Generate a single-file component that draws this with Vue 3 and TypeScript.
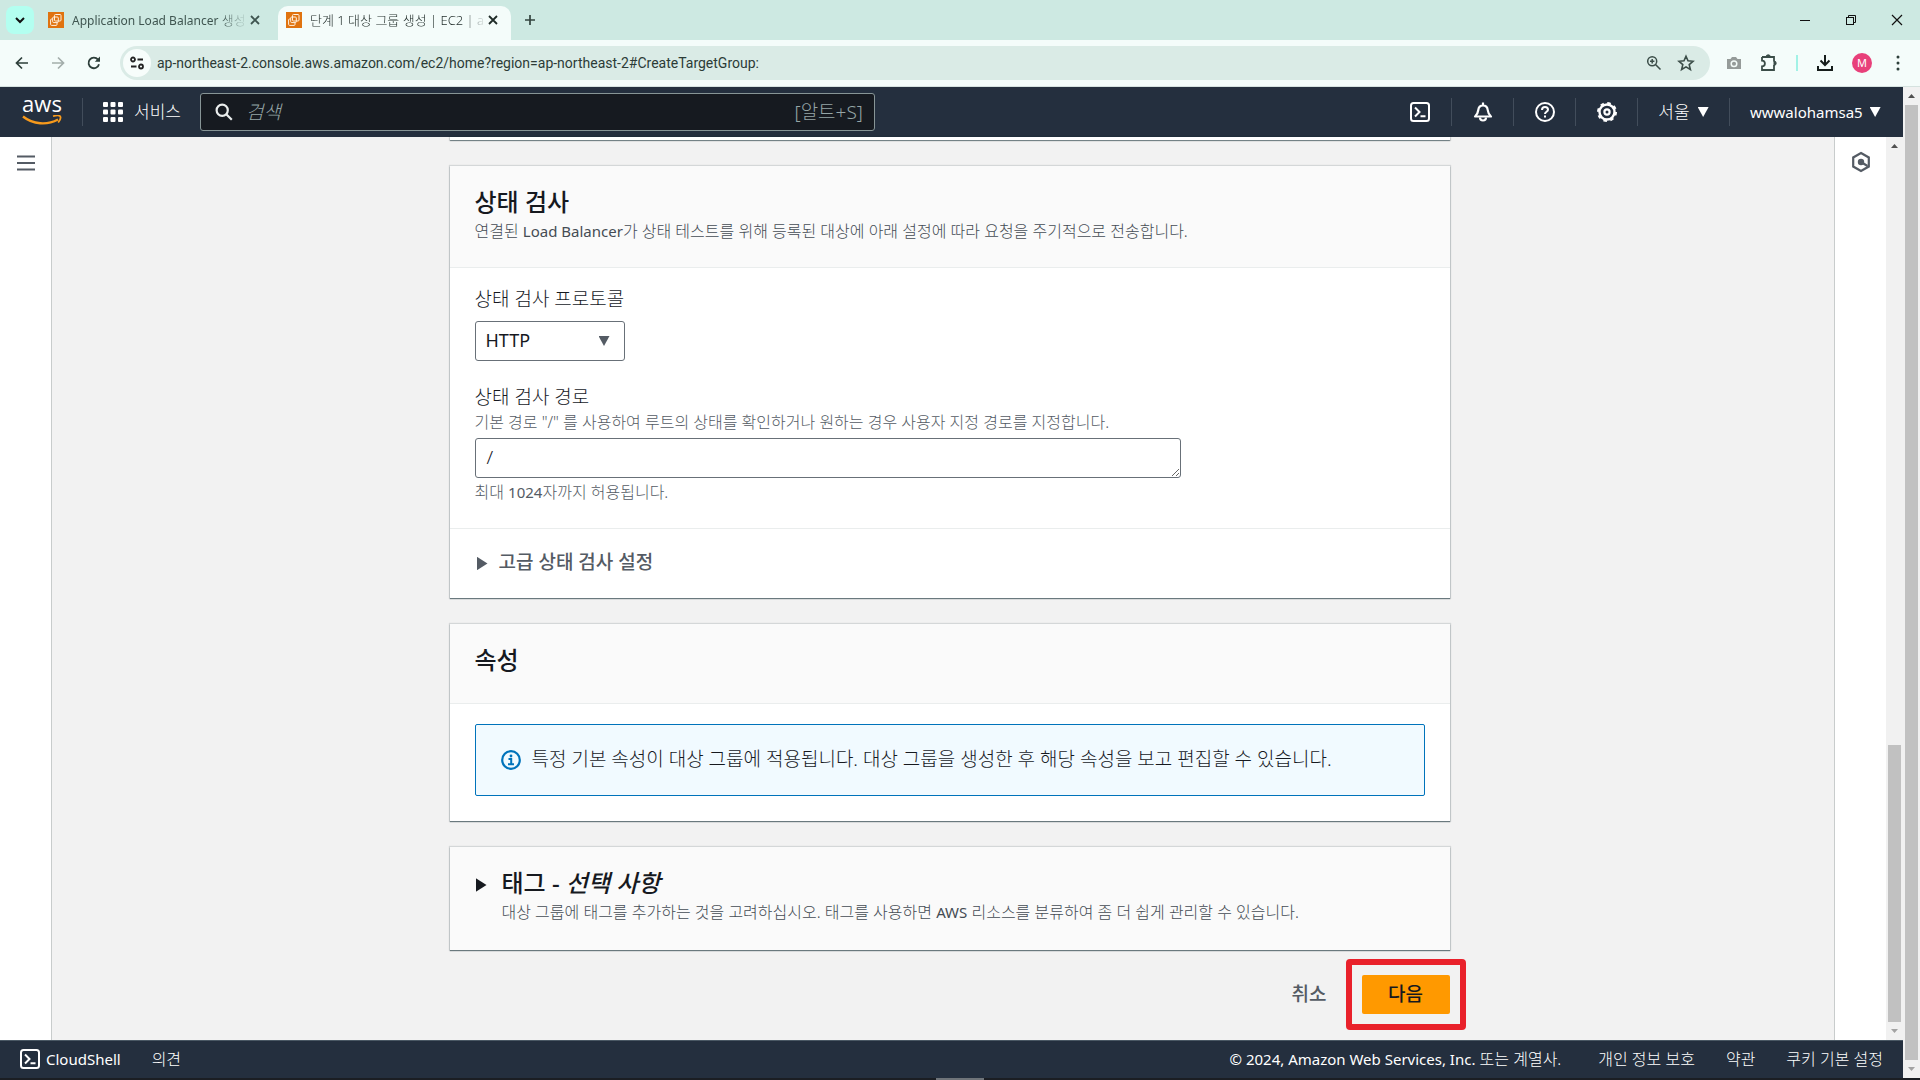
<script setup lang="ts">
import { ref } from 'vue'

interface Tab {
  latin: string
  title: string
  active: boolean
}

const tabs: Tab[] = [
  { latin: 'Application Load Balancer', title: ' 생성', active: false },
  { latin: '', title: '단계 1 대상 그룹 생성 | EC2 | a', active: true },
]
const url = ref('ap-northeast-2.console.aws.amazon.com/ec2/home?region=ap-northeast-2#CreateTargetGroup:')
const search = ref('')
const protocol = ref('HTTP')
const path = ref('/')
const legal: string[] = ['개인 정보 보호', '약관', '쿠키 기본 설정']
</script>

<template>
  <div class="window">
    <header class="tabstrip">
      <button class="tab-search" aria-label="탭 검색">
        <svg width="12" height="12" viewBox="0 0 12 12"><path d="M2 4l4 4 4-4" fill="none" stroke="#111" stroke-width="2" /></svg>
      </button>
      <div v-for="tab in tabs" :key="tab.title" class="tab" :class="{ active: tab.active }">
        <svg class="favicon" width="16" height="16" viewBox="0 0 16 16">
          <rect width="16" height="16" fill="#e0730f" />
          <g fill="none" stroke="#fff1df" stroke-width="1">
            <rect x="6.5" y="2.5" width="6.5" height="6.5" rx="1" />
            <rect x="4.7" y="5" width="5.6" height="5.6" rx="1" />
            <path d="M4.5 7H3.6a1 1 0 0 0-1 1v4.4a1 1 0 0 0 1 1H8a1 1 0 0 0 1-1v-1.6" />
          </g>
        </svg>
        <span class="tab-title"><span class="latin tiny">{{ tab.latin }}</span>{{ tab.title }}</span>
        <button class="tab-close" aria-label="탭 닫기">
          <svg width="10" height="10" viewBox="0 0 10 10"><path d="M1 1l8 8M9 1l-8 8" stroke="currentColor" stroke-width="1.8" /></svg>
        </button>
      </div>
      <button class="new-tab" aria-label="새 탭">
        <svg width="12" height="12" viewBox="0 0 12 12"><path d="M6 1v10M1 6h10" stroke="#33443f" stroke-width="1.7" /></svg>
      </button>
      <div class="window-controls">
        <button aria-label="최소화"><svg width="12" height="12" viewBox="0 0 12 12"><path d="M1 6.5h10" stroke="#111" /></svg></button>
        <button aria-label="이전 크기로"><svg width="12" height="12" viewBox="0 0 12 12" fill="none" stroke="#111"><rect x="1.5" y="3.5" width="7" height="7" /><path d="M3.5 3V1.5h7v7H9" /></svg></button>
        <button aria-label="닫기"><svg width="12" height="12" viewBox="0 0 12 12"><path d="M1 1l10 10M11 1L1 11" stroke="#111" stroke-width="1.2" /></svg></button>
      </div>
    </header>

    <div class="toolbar">
      <button class="tool" aria-label="뒤로"><svg width="16" height="16" viewBox="0 0 16 16"><path d="M14 8H3M8 2.5L2.5 8 8 13.5" fill="none" stroke="#2d3f3a" stroke-width="1.7" /></svg></button>
      <button class="tool" aria-label="앞으로"><svg width="16" height="16" viewBox="0 0 16 16"><path d="M2 8h11M8 2.5L13.5 8 8 13.5" fill="none" stroke="#a3aeab" stroke-width="1.7" /></svg></button>
      <button class="tool" aria-label="새로고침"><svg width="16" height="16" viewBox="0 0 16 16"><path d="M13 9.2A5.3 5.3 0 1 1 12 4.6" fill="none" stroke="#2d3f3a" stroke-width="1.8" /><path d="M14 1.5v5.2H8.8z" fill="#2d3f3a" /></svg></button>
      <div class="omnibox">
        <button class="site-info" aria-label="사이트 정보">
          <svg width="16" height="14" viewBox="0 0 16 14" fill="none" stroke="#222" stroke-width="1.8"><circle cx="4" cy="3.5" r="2" /><path d="M8.5 3.5H14M2 10.5h5.5" /><circle cx="12" cy="10.5" r="2" /></svg>
        </button>
        <input v-model="url" class="url" aria-label="주소창" spellcheck="false" />
        <button aria-label="확대/축소"><svg width="16" height="16" viewBox="0 0 16 16" fill="none" stroke="#3b4d48" stroke-width="1.5"><circle cx="6.2" cy="6.2" r="4.5" /><path d="M9.5 9.5l5 5M6.2 4v4.4M4 6.2h4.4" /></svg></button>
        <button aria-label="북마크"><svg width="18" height="18" viewBox="0 0 18 18"><path d="M9 2.2l2 4.6 5 .5-3.8 3.3 1.2 4.9L9 12.9l-4.4 2.6 1.2-4.9L2 7.3l5-.5z" fill="none" stroke="#3b4d48" stroke-width="1.6" /></svg></button>
      </div>
      <div class="extensions">
        <button aria-label="캡처"><svg width="16" height="16" viewBox="0 0 16 16"><path d="M1 4h3.5L6 2h4l1.5 2H15v10H1z" fill="#959b99" /><circle cx="8" cy="8.8" r="2.8" fill="none" stroke="#f3fbf8" stroke-width="1.5" /></svg></button>
        <button aria-label="확장 프로그램"><svg width="18" height="18" viewBox="0 0 18 18"><path d="M2 3h12v4.5M14 11v5H2v-3.6a2.6 2.6 0 0 0 0-5.8V3" fill="none" stroke="#3b4d48" stroke-width="1.8" /><path d="M6 3a2.2 2.2 0 0 1 4.4 0zM14 7a2.2 2.2 0 0 1 0 4.4z" fill="#3b4d48" stroke="#3b4d48" stroke-width="1" /></svg></button>
        <span class="ext-divider"></span>
        <button aria-label="다운로드"><svg width="18" height="18" viewBox="0 0 18 18" fill="none" stroke="#161d1b" stroke-width="2"><path d="M9 1v9.5M4.5 6.5L9 11l4.5-4.5M2 12v4h14v-4" /></svg></button>
        <button class="avatar" aria-label="프로필">M</button>
        <button aria-label="메뉴"><svg width="4" height="16" viewBox="0 0 4 16" fill="#2d3f3a"><circle cx="2" cy="2" r="1.5" /><circle cx="2" cy="8" r="1.5" /><circle cx="2" cy="14" r="1.5" /></svg></button>
      </div>
    </div>

    <div class="viewport">
      <div class="console">
        <nav class="topnav">
          <a href="#" class="logo" aria-label="AWS">
            <span>aws</span>
            <svg width="40" height="11" viewBox="0 0 40 11"><path d="M1 1.5C11 9.5 25 10.5 36 4.5" fill="none" stroke="#f79a1c" stroke-width="2.4" /><path d="M31 1.2c3-.8 6-1 7 0s0 4-1.8 6.3" fill="none" stroke="#f79a1c" stroke-width="1.8" /></svg>
          </a>
          <span class="sep"></span>
          <button class="services">
            <svg width="20" height="20" viewBox="0 0 20 20" fill="#fff"><g v-for="r in 3" :key="r"><rect v-for="c in 3" :key="c" :x="(c - 1) * 7.5" :y="(r - 1) * 7.5" width="5" height="5" rx="1" /></g></svg>
            서비스
          </button>
          <label class="search">
            <svg width="18" height="18" viewBox="0 0 18 18" fill="none" stroke="#eaeded" stroke-width="2.2"><circle cx="7.2" cy="7.2" r="5.6" /><path d="M11.3 11.3l5.5 5.5" /></svg>
            <input v-model="search" placeholder="검색" aria-label="검색" />
            <span>[알트+S]</span>
          </label>
          <div class="nav-tools">
            <button aria-label="CloudShell"><svg width="20" height="20" viewBox="0 0 20 20" fill="none" stroke="#fff" stroke-width="2"><rect x="1" y="1" width="18" height="18" rx="2.5" /><path d="M5 5.5L9.5 10 5 14.5M10.5 14.2h5" /></svg></button>
            <button aria-label="알림"><svg width="20" height="20" viewBox="0 0 20 20" fill="none" stroke="#fff" stroke-width="2.2"><path d="M10 .5v3M2 14.5c2.5-2 3-4 3.3-6.500C5.600 5 7.400 3.500 10 3.500S14.400 5 14.700 8c.3 2.500.8 4.500 3.300 6.500z" stroke-linejoin="round" /><path d="M7 15.5a3 3 0 0 0 6 0" /></svg></button>
            <button aria-label="도움말"><svg width="20" height="20" viewBox="0 0 20 20" fill="none" stroke="#fff" stroke-width="2"><circle cx="10" cy="10" r="9" /><path d="M7 8c0-2 1.3-3 3-3s3 1.1 3 2.7c0 2-3 2.2-3 4.3M10 13.5v2" /></svg></button>
            <button aria-label="설정"><svg width="20" height="20" viewBox="0 0 20 20" fill="none" stroke="#fff"><circle cx="10" cy="10" r="7.5" stroke-width="2.4" /><circle cx="10" cy="10" r="9" stroke-width="2" stroke-dasharray="3.534 3.534" /><circle cx="10" cy="10" r="2.6" stroke-width="2.2" /></svg></button>
            <button class="region">서울 <i class="caret"></i></button>
            <button class="account"><span class="latin small">wwwalohamsa5</span> <i class="caret"></i></button>
          </div>
        </nav>

        <div class="workspace">
          <aside class="side left">
            <button aria-label="탐색 메뉴 열기"><svg width="18" height="16" viewBox="0 0 18 16"><path d="M0 1.5h18M0 8h18M0 14.5h18" stroke="#545b64" stroke-width="2" /></svg></button>
          </aside>

          <main>
            <form class="wizard" @submit.prevent>
              <div class="card previous"></div>

              <section class="card">
                <div class="card-head">
                  <h2>상태 검사</h2>
                  <p>연결된 <span class="latin small">Load Balancer</span>가 상태 테스트를 위해 등록된 대상에 아래 설정에 따라 요청을 주기적으로 전송합니다.</p>
                </div>
                <div class="card-body fields">
                  <div class="field">
                    <label for="protocol">상태 검사 프로토콜</label>
                    <div class="select">
                      <select id="protocol" v-model="protocol">
                        <option>HTTP</option>
                        <option>HTTPS</option>
                      </select>
                      <i class="caret"></i>
                    </div>
                  </div>
                  <div class="field">
                    <label for="path">상태 검사 경로</label>
                    <p>기본 경로 "/" 를 사용하여 루트의 상태를 확인하거나 원하는 경우 사용자 지정 경로를 지정합니다.</p>
                    <textarea id="path" v-model="path" rows="1" maxlength="1024"></textarea>
                    <p>최대 <span class="latin small">1024</span>자까지 허용됩니다.</p>
                  </div>
                </div>
                <button class="advanced"><i class="arrow"></i><span class="label">고급 상태 검사 설정</span></button>
              </section>

              <section class="card">
                <div class="card-head attributes"><h2>속성</h2></div>
                <div class="card-body">
                  <div class="alert" role="note">
                    <svg width="20" height="20" viewBox="0 0 20 20"><circle cx="10" cy="10" r="8.8" fill="none" stroke="#0073bb" stroke-width="2.2" /><circle cx="10" cy="6" r="1.4" fill="#0073bb" /><path d="M7.5 9h2.7v5M7 14.3h6" fill="none" stroke="#0073bb" stroke-width="2" /></svg>
                    <span class="label">특정 기본 속성이 대상 그룹에 적용됩니다. 대상 그룹을 생성한 후 해당 속성을 보고 편집할 수 있습니다.</span>
                  </div>
                </div>
              </section>

              <section class="card tags">
                <button class="tags-toggle" aria-label="태그 펼치기"><i class="arrow"></i></button>
                <div>
                  <h2>태그 - <em>선택 사항</em></h2>
                  <p>대상 그룹에 태그를 추가하는 것을 고려하십시오. 태그를 사용하면 <span class="latin small">AWS</span> 리소스를 분류하여 좀 더 쉽게 관리할 수 있습니다.</p>
                </div>
              </section>

              <div class="actions">
                <button class="cancel">취소</button>
                <span class="next-wrap"><button class="next">다음</button></span>
              </div>
            </form>
          </main>

          <aside class="side right">
            <button aria-label="도움말 패널"><svg width="20" height="22" viewBox="0 0 20 22"><path d="M10 2l7.8 4.5v9L10 20l-7.8-4.5v-9z" fill="none" stroke="#545b64" stroke-width="2.2" /><circle cx="10" cy="11" r="3.2" fill="#545b64" /><path d="M10 11l6.5 4" stroke="#545b64" stroke-width="2.2" /></svg></button>
          </aside>
          <div class="scrollbar" aria-hidden="true">
            <i class="up"></i>
            <div class="track inner"><div></div></div>
            <i class="down"></i>
          </div>
        </div>

        <footer>
          <button class="shell">
            <svg width="20" height="20" viewBox="0 0 20 20" fill="none" stroke="#fff" stroke-width="2"><rect x="1" y="1" width="18" height="18" rx="2.5" /><path d="M5 5.5L9.5 10 5 14.5M10.5 14.2h5" /></svg>
            <span class="latin small">CloudShell</span>
          </button>
          <a href="#">의견</a>
          <span class="copyright"><span class="latin small">© 2024, Amazon Web Services, Inc.</span> 또는 계열사.</span>
          <a v-for="item in legal" :key="item" href="#" class="legal">{{ item }}</a>
        </footer>
      </div>
      <div class="scrollbar" aria-hidden="true">
        <i class="up"></i>
        <div class="track outer"><div></div></div>
        <i class="down"></i>
      </div>
    </div>
    <div class="taskbar"><span></span></div>
  </div>
</template>

<style>
body {
  margin: 0;
  background: #f2f2f2;
}
</style>

<style scoped>
.window {
  display: flex;
  flex-direction: column;
  min-height: 100vh;
  font-family: "Noto Sans", "Noto Sans CJK KR", sans-serif;
  font-size: 19px;
  font-weight: 300;
  line-height: 24px;
  color: #16191f;
}
.window *,
.window {
  box-sizing: border-box;
}
button,
input,
select,
textarea {
  font: inherit;
  color: inherit;
  background: none;
  border: 0;
  padding: 0;
  margin: 0;
  outline: none;
}
button {
  display: flex;
  align-items: center;
  justify-content: center;
}
a {
  color: inherit;
  text-decoration: none;
}
h2,
p {
  margin: 0;
}
svg {
  flex: none;
}
.latin {
  font-weight: 400;
}
.latin.small {
  font-size: 15px;
}
.latin.tiny {
  font-size: 12px;
}

.tabstrip {
  display: flex;
  height: 40px;
  padding-left: 6px;
  background: #cde9e2;
}
.tab-search {
  width: 28px;
  height: 28px;
  margin: 6px 6px 0 0;
  border-radius: 8px;
  background: #b3fff0;
}
.tab {
  display: flex;
  align-items: center;
  width: 233px;
  height: 34px;
  margin: 6px 5px 0 0;
  padding: 0 12px 6px 8px;
  color: #3f5550;
}
.tab.active {
  margin-right: 0;
  border-radius: 10px 10px 0 0;
  background: #f4fcfa;
  color: #1f2b28;
}
.tab-title {
  flex: 1;
  margin-left: 8px;
  white-space: nowrap;
  font-size: 13px;
  line-height: 20px;
  mask-image: linear-gradient(90deg, #000 85%, transparent);
}
.tab-close {
  width: 12px;
  height: 16px;
}
.new-tab {
  width: 28px;
  height: 28px;
  margin: 6px 0 0 5px;
}
.window-controls {
  display: flex;
  margin-left: auto;
}
.window-controls button {
  width: 46px;
  height: 40px;
}
.toolbar {
  display: flex;
  align-items: center;
  height: 47px;
  padding: 0 20px 0 4px;
  background: #f4fcfa;
  border-bottom: 1px solid #d5e2df;
}
.tool {
  width: 36px;
  height: 34px;
}
.omnibox {
  display: flex;
  align-items: center;
  flex: 1;
  gap: 15px;
  height: 34px;
  margin-left: 8px;
  padding: 0 15px 0 3px;
  border-radius: 17px;
  background: #daebe6;
}
.site-info {
  width: 28px;
  height: 28px;
  margin-right: -9px;
  border-radius: 14px;
  background: #f7fdfb;
}
.url {
  flex: 1;
  font-family: Roboto, sans-serif;
  font-size: 14px;
  font-weight: 400;
  color: #2c3b37;
}
.extensions {
  display: flex;
  align-items: center;
  gap: 18px;
  margin-left: 16px;
}
.ext-divider {
  width: 2px;
  height: 16px;
  background: #a2f2e6;
}
.avatar {
  width: 20px;
  height: 20px;
  margin-right: 6px;
  border-radius: 10px;
  background: #e8407a;
  color: #fff;
  font-size: 11px;
  font-weight: 400;
}

.viewport {
  display: flex;
  flex: 1;
}
.console {
  display: flex;
  flex-direction: column;
  flex: 1;
  min-width: 0;
}
.topnav {
  display: flex;
  align-items: center;
  height: 50px;
  color: #fff;
  background: #242f3e;
  font-size: 17px;
}
.logo {
  display: flex;
  flex-direction: column;
  align-items: center;
  gap: 4px;
  width: 40px;
  margin-left: 22px;
  padding-bottom: 4px;
  font-family: "Open Sans", sans-serif;
  font-weight: 500;
  font-size: 22px;
  line-height: 16px;
}
.sep {
  width: 1px;
  height: 28px;
  margin: 0 20px;
  background: #424d5b;
}
.services {
  gap: 11px;
}
.search {
  display: flex;
  align-items: center;
  width: 675px;
  height: 38px;
  margin-left: 19px;
  padding: 0 11px 0 14px;
  border: 1px solid #879596;
  border-radius: 3px;
  background: #161a20;
  color: #95a5a6;
  font-size: 19px;
}
.search input {
  flex: 1;
  margin-left: 13px;
  font-style: italic;
}
.search input::placeholder {
  color: #95a5a6;
  opacity: 1;
}
.nav-tools {
  display: flex;
  align-items: center;
  height: 28px;
  margin-left: auto;
}
.nav-tools button {
  width: 62px;
  height: 28px;
  border-left: 1px solid #424d5b;
}
.nav-tools button:first-child {
  border-left: 0;
}
.nav-tools .region {
  width: 92px;
  gap: 8px;
}
.nav-tools .account {
  justify-content: flex-start;
  width: 174px;
  padding-left: 20px;
  gap: 7px;
}
.caret {
  width: 11px;
  height: 10px;
  background: currentColor;
  clip-path: polygon(0 0, 100% 0, 50% 100%);
}
.arrow {
  flex: none;
  width: 11px;
  height: 14px;
  background: currentColor;
  clip-path: polygon(0 0, 100% 50%, 0 100%);
}

.workspace {
  display: flex;
  flex: 1;
}
.side {
  width: 52px;
  padding-top: 18px;
  background: #fff;
}
.side button {
  width: 100%;
}
.left {
  border-right: 1px solid #c8cccc;
}
.left button {
  height: 16px;
}
.right {
  padding-top: 14px;
  border-left: 1px solid #c8cccc;
}
main {
  flex: 1;
  padding-left: 13px;
  background: #f2f2f2;
}
.wizard {
  display: flex;
  flex-direction: column;
  gap: 26px;
  max-width: 1000px;
  margin: 0 auto;
}
.card {
  background: #fff;
  box-shadow: 0 1px 1px rgba(0, 28, 36, 0.5), 0 0 1px 1px rgba(0, 28, 36, 0.12);
}
.previous {
  height: 3px;
}
.card-head {
  padding: 21px 25px 22px;
  background: #fafafa;
  border-bottom: 1px solid #eaeded;
}
.card-head.attributes {
  padding-bottom: 28px;
}
h2 {
  font-size: 24px;
  line-height: 30px;
  font-weight: 500;
}
p {
  font-size: 16px;
  line-height: 28px;
  color: #454c54;
}
.card-body {
  padding: 20px 25px 25px;
}
.fields {
  display: flex;
  flex-direction: column;
  gap: 24px;
  padding: 19px 25px 23px;
  border-bottom: 1px solid #eaeded;
}
.field {
  display: flex;
  flex-direction: column;
  align-items: flex-start;
}
.field p {
  line-height: 26px;
  color: #545b64;
}
.select {
  display: flex;
  align-items: center;
  width: 150px;
  height: 40px;
  margin-top: 10px;
  padding-right: 14px;
  border: 1px solid #687078;
  border-radius: 3px;
  color: #545b64;
}
.select select {
  flex: 1;
  height: 38px;
  padding: 0 0 2px 10px;
  appearance: none;
  font-size: 18px;
  font-weight: 400;
  color: #16191f;
}
textarea {
  width: 706px;
  max-width: 100%;
  height: 40px;
  margin: 3px 0 1px;
  padding: 6px 11px;
  border: 1px solid #687078;
  border-radius: 3px;
  overflow: hidden;
  resize: vertical;
}
.advanced {
  gap: 11px;
  height: 69px;
  padding-left: 27px;
  font-weight: 500;
  color: #545b64;
}
.label {
  padding-bottom: 3px;
}
.alert {
  display: flex;
  align-items: center;
  gap: 11px;
  min-height: 72px;
  padding: 0 25px;
  border: 1px solid #0073bb;
  border-radius: 2px;
  background: #f1faff;
}
.tags {
  display: flex;
  gap: 15px;
  padding: 21px 26px 24px;
  background: #fafafa;
}
.tags-toggle {
  height: 34px;
}
.actions {
  display: flex;
  align-items: center;
  justify-content: flex-end;
  gap: 35px;
  height: 61px;
  margin-top: -1px;
  padding-bottom: 22px;
  font-weight: 500;
}
.cancel {
  color: #545b64;
}
.cancel,
.next {
  padding-bottom: 2px;
}
.next-wrap {
  position: relative;
}
.next-wrap::after {
  content: "";
  position: absolute;
  inset: -16px;
  border: 6px solid #e9212b;
  border-radius: 4px;
  pointer-events: none;
}
.next {
  width: 88px;
  height: 39px;
  border-radius: 2px;
  background: #ff9900;
}

.scrollbar {
  display: flex;
  flex-direction: column;
  align-items: center;
  width: 17px;
  background: #f1f1f1;
}
.scrollbar i {
  width: 7px;
  height: 4px;
  margin: 7px 0;
  background: #505050;
}
.up {
  clip-path: polygon(50% 0, 100% 100%, 0 100%);
}
.scrollbar .down {
  background: #a3a3a3;
  clip-path: polygon(0 0, 100% 0, 50% 100%);
}
.track {
  display: flex;
  align-items: flex-end;
  flex: 1;
}
.track div {
  width: 13px;
  height: 100%;
  background: #c1c1c1;
}
.inner div {
  height: 32%;
}

footer {
  display: flex;
  align-items: center;
  height: 38px;
  padding: 0 20px 2px;
  border-top: 1px solid #4a5864;
  color: #fff;
  background: #242f3e;
  font-size: 16px;
}
.shell {
  gap: 6px;
  margin-right: 31px;
}
.copyright {
  margin-left: auto;
  margin-right: 6px;
}
.legal {
  margin-left: 31px;
}
.taskbar {
  height: 2px;
  background: #1b1e23;
}
.taskbar span {
  display: block;
  width: 48px;
  height: 2px;
  margin: 0 auto;
  background: #6f7479;
}
</style>
